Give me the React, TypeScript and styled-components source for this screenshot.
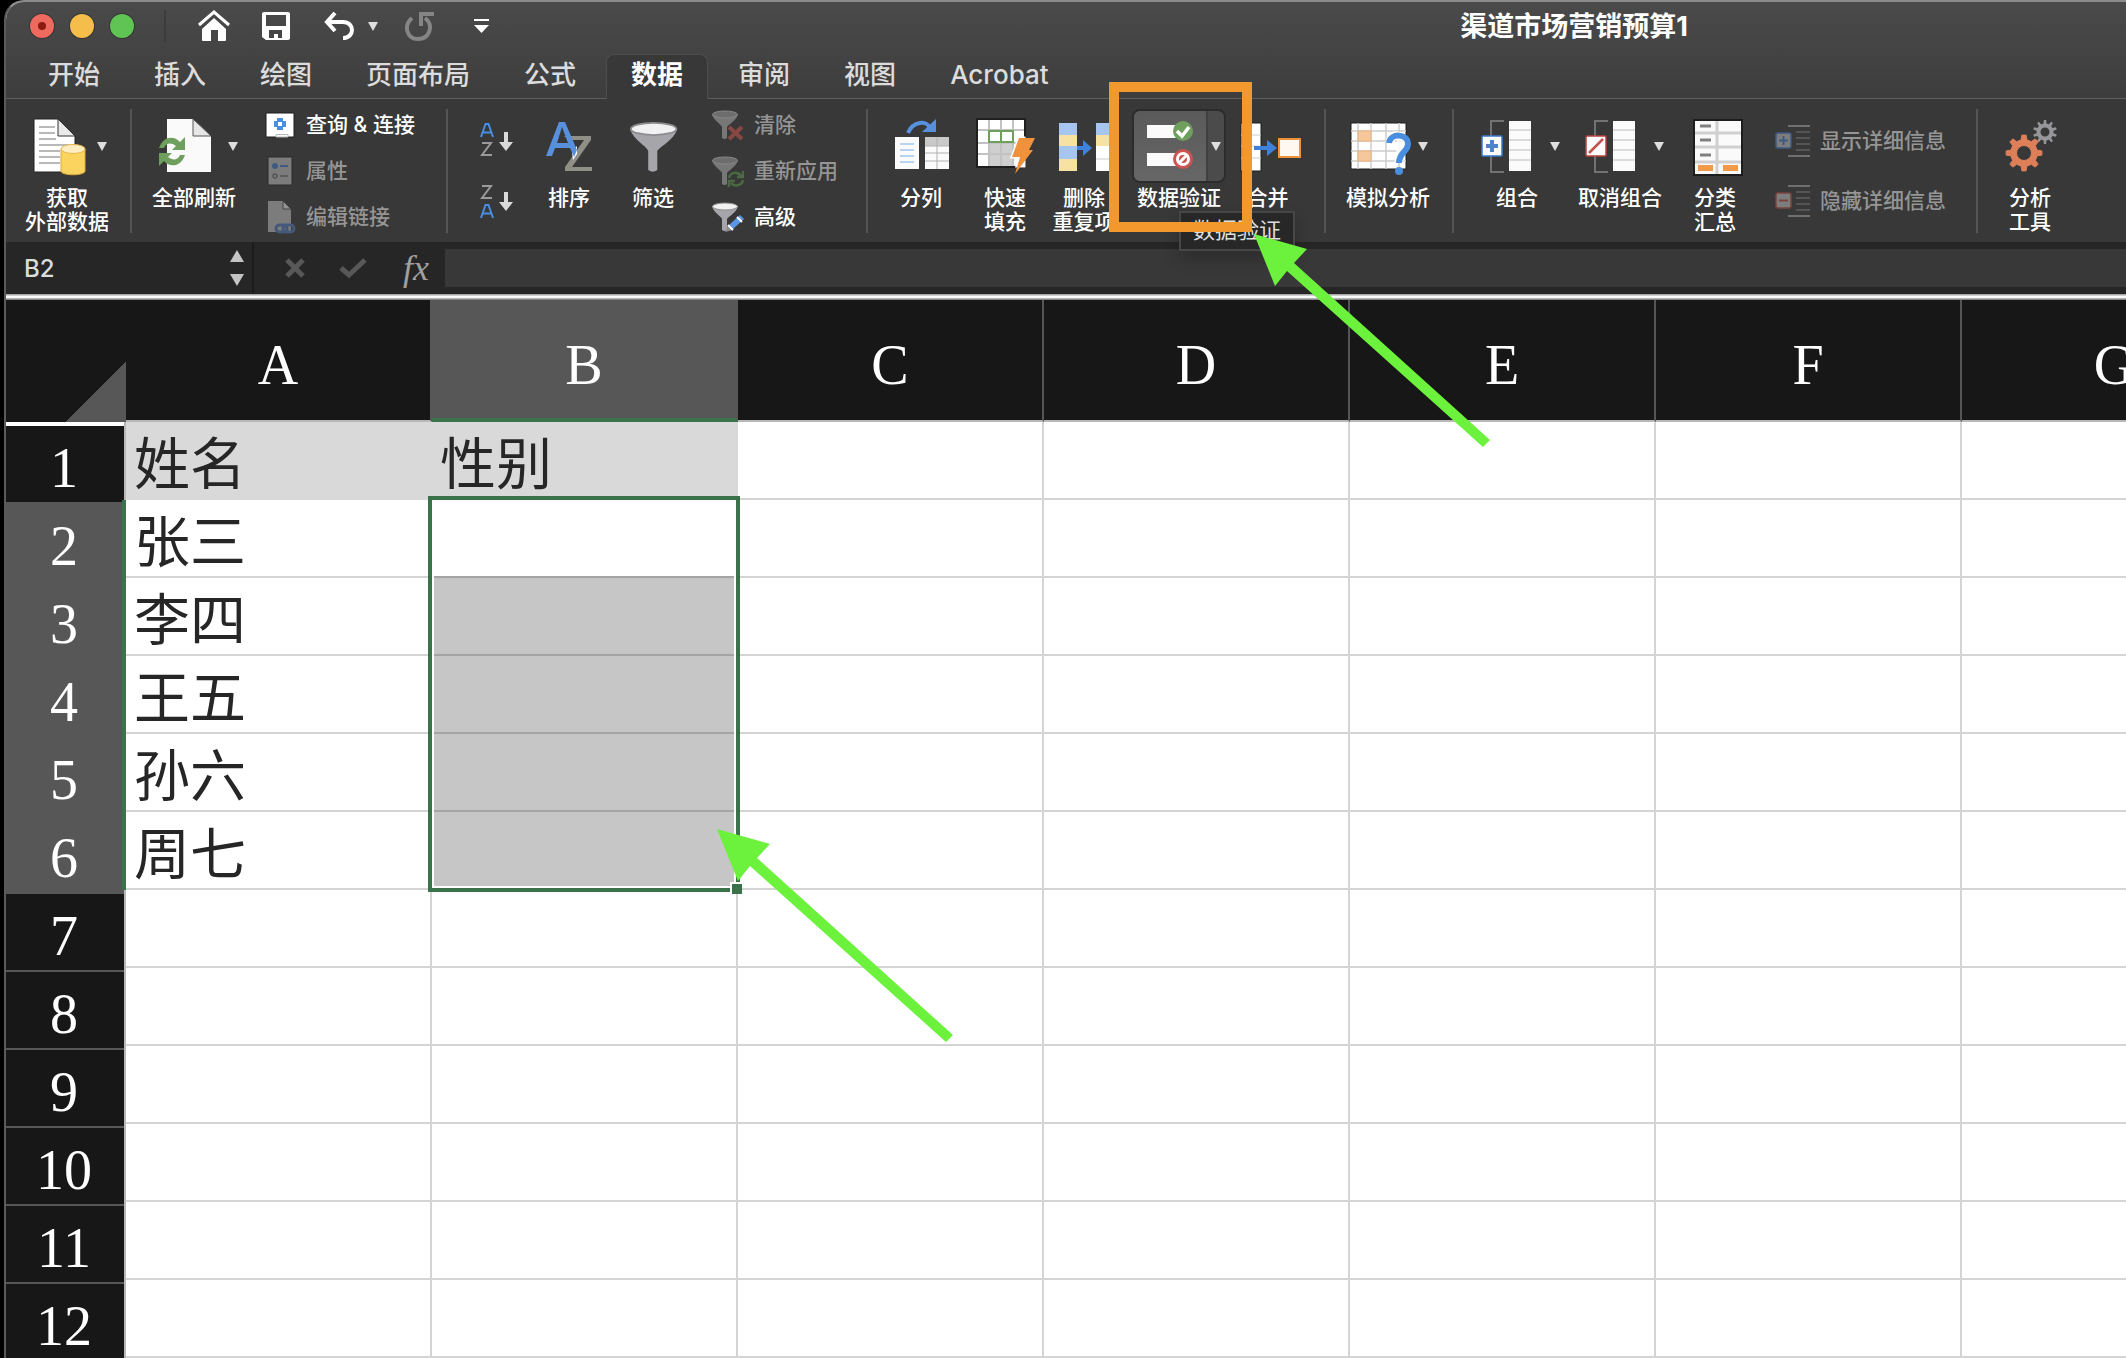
import React from "react";
import styled, { createGlobalStyle, css } from "styled-components";

const UI_FONT = '"Inter", "Noto Sans CJK SC", sans-serif';
const SHEET_FONT = '"Liberation Serif", "Noto Sans CJK SC", serif';

const GREEN = "#3a7349";
const LIME = "#6cf23c";
const HEAD_DARK = "#171717";
const HEAD_PICKED = "#575757";
const HEAD_EDGE = "#b8b8b8";
const GRID_LINE = "#d4d4d4";

const GlobalStyle = createGlobalStyle`
  *, *::before, *::after { box-sizing: border-box; }
  body { margin: 0; background: #000; font-family: ${UI_FONT}; }
  button, input { font: inherit; color: inherit; border: 0; background: none; padding: 0; margin: 0; }
  svg { display: block; flex: none; }
`;

/* ---------- window frame ---------- */

const Page = styled.div`
  position: relative;
  height: 100vh;
  overflow: hidden;
  padding-left: 4px;
`;

const Window = styled.div`
  height: 100%;
  overflow: hidden;
  border-left: 2px solid #5a5a5a;
  border-top: 2px solid #8c8c8c;
  border-top-left-radius: 20px;
  background: #fff;
`;

const Chrome = styled.header`
  background: linear-gradient(#4a4a4a, #3d3d3d);
  border-bottom: 1px solid #5e5e5e;
`;

const TitleBar = styled.div`
  display: flex;
  align-items: center;
  height: 48px;
  padding-left: 24px;
`;

const Lights = styled.div`
  display: flex;
  gap: 16px;
`;

const Light = styled.button<{ $color: string }>`
  display: grid;
  place-items: center;
  width: 24px;
  height: 24px;
  border-radius: 50%;
  background: ${(p) => p.$color};
  box-shadow: 0 0 0 1px rgba(0, 0, 0, 0.25);
`;

const LightDot = styled.span`
  width: 8px;
  height: 8px;
  border-radius: 50%;
  background: #8c1a10;
`;

const TitleSep = styled.span`
  width: 2px;
  height: 32px;
  margin: 0 32px 0 30px;
  background: #3c3c3c;
`;

const QuickTools = styled.div`
  display: flex;
  align-items: center;
`;

const QuickButton = styled.button<{ $gap?: number }>`
  display: grid;
  place-items: center;
  margin-right: ${(p) => p.$gap ?? 0}px;
`;

const Title = styled.h1`
  margin: 0 438px 0 auto;
  padding-top: 2px;
  font-size: 27px;
  line-height: 32px;
  font-weight: 700;
  color: #fff;
`;

const Tabs = styled.nav`
  display: flex;
  gap: 6px;
  padding: 4px 0 0 18px;
`;

const Tab = styled.button<{ $active?: boolean }>`
  height: 45px;
  padding: 0 23px 4px;
  margin-bottom: -1px;
  border: 1px solid transparent;
  border-bottom: 0;
  border-radius: 8px 8px 0 0;
  font-size: 26px;
  line-height: 32px;
  font-weight: 500;
  color: #dcdcdc;
  ${(p) =>
    p.$active &&
    css`
      padding: 0 24px 4px;
      background: #383838;
      border-color: #4e4e4e;
      font-weight: 700;
      color: #fff;
    `}
`;

/* ---------- ribbon ---------- */

const Ribbon = styled.div`
  display: flex;
  height: 143px;
  background: #383838;
  color: #fff;
  font-size: 21px;
  line-height: 24px;
  font-weight: 500;
`;

const Group = styled.section<{ $start?: number; $end?: number }>`
  display: flex;
  align-items: center;
  flex: none;
  padding-left: ${(p) => p.$start ?? 0}px;
  &::after {
    content: "";
    width: 2px;
    height: 124px;
    margin-left: ${(p) => p.$end ?? 2}px;
    background: #555;
  }
  &:last-child::after {
    display: none;
  }
`;

const Big = styled.button<{ $w: number }>`
  flex: none;
  width: ${(p) => p.$w}px;
  height: 129px;
  padding-top: 3px;
  display: flex;
  flex-direction: column;
  align-items: center;
  gap: 3px;
  white-space: pre-line;
`;

const IconRow = styled.span`
  display: flex;
  flex: none;
  align-items: center;
  gap: 6px;
  height: 74px;
`;

const Split = styled.span`
  display: flex;
  flex: none;
  width: 94px;
  height: 74px;
  border: 2px solid #2c2c2c;
  border-radius: 8px;
  background: #4b4b4b;
  overflow: hidden;
`;

const SplitMain = styled.span`
  display: grid;
  place-items: center;
  width: 72px;
  background: linear-gradient(#5a5a5a, #666);
`;

const SplitDrop = styled.span`
  display: grid;
  place-items: center;
  flex: 1;
  border-left: 2px solid #404040;
`;

const List = styled.div<{ $w: number; $start: number }>`
  flex: none;
  width: ${(p) => p.$w}px;
  padding-left: ${(p) => p.$start}px;
  display: flex;
  flex-direction: column;
`;

const ListButton = styled.button<{ $h: number }>`
  display: flex;
  align-items: center;
  gap: 10px;
  height: ${(p) => p.$h}px;
  white-space: nowrap;
  &:disabled {
    color: #959595;
  }
`;

/* ---------- formula bar ---------- */

const FormulaBar = styled.div`
  display: flex;
  align-items: center;
  height: 52px;
  background: #262626;
  color: #dcdcdc;
  font-size: 24px;
  font-weight: 500;
`;

const NameBox = styled.div`
  display: flex;
  align-items: center;
  width: 248px;
  height: 52px;
  padding: 0 8px 0 18px;
  border-right: 2px solid #1c1c1c;
`;

const NameInput = styled.input`
  flex: 1;
  min-width: 0;
  outline: 0;
`;

const Stepper = styled.div`
  display: flex;
  flex-direction: column;
  gap: 12px;
`;

const FormulaTools = styled.div`
  display: flex;
  align-items: center;
  gap: 34px;
  padding: 0 14px 0 31px;
`;

const FormulaInput = styled.input`
  flex: 1;
  height: 38px;
  padding: 0 10px;
  background: #383838;
  outline: 0;
`;

const Rail = styled.div`
  height: 6px;
  background: linear-gradient(#a8a6a8 0 1px, #cfcdcf 1px 2px, #fafafa 2px 4px, #b4b2b4 4px 5px, #8a898a 5px);
`;

/* ---------- sheet ---------- */

const Sheet = styled.table`
  table-layout: fixed;
  width: 2262px;
  border-collapse: separate;
  border-spacing: 0;
  font-family: ${SHEET_FONT};
  font-size: 56px;
  line-height: 60px;
  color: #262626;
`;

const HeadCol = styled.col`
  width: 120px;
`;

const DataCol = styled.col`
  width: 306px;
`;

const Corner = styled.td`
  height: 122px;
  padding: 0;
  background: linear-gradient(to bottom right, ${HEAD_DARK} 50%, ${HEAD_PICKED} 50%) right bottom / 60px 60px no-repeat
    ${HEAD_DARK};
`;

const ColumnHead = styled.th<{ $picked: boolean; $beforePicked: boolean }>`
  height: 122px;
  padding: ${(p) => (p.$picked ? 12 : 10)}px 0 0;
  font-weight: 400;
  color: #fff;
  background: ${(p) => (p.$picked ? HEAD_PICKED : HEAD_DARK)};
  border-right: 2px solid ${(p) => (p.$picked || p.$beforePicked ? HEAD_PICKED : "#555")};
  border-bottom: ${(p) => (p.$picked ? `4px solid ${GREEN}` : `2px solid ${HEAD_EDGE}`)};
`;

const RowHead = styled.th<{ $picked: boolean; $lead: string }>`
  height: 78px;
  padding: 14px ${(p) => (p.$picked ? 0 : 2)}px 0 0;
  font-weight: 400;
  color: #fff;
  border-right: ${(p) => (p.$picked ? `4px solid ${GREEN}` : `2px solid ${HEAD_EDGE}`)};
  background: ${(p) => `linear-gradient(${p.$lead}, ${p.$picked ? HEAD_PICKED : HEAD_DARK} 4px)`};
`;

const Cell = styled.td<{ $filled?: boolean }>`
  position: relative;
  height: 78px;
  padding: 10px 8px 0;
  white-space: nowrap;
  background: ${(p) => (p.$filled ? "#d9d9d9" : "#fff")};
  border-right: 2px solid ${(p) => (p.$filled ? "#d9d9d9" : GRID_LINE)};
  border-bottom: 2px solid ${(p) => (p.$filled ? "#d9d9d9" : GRID_LINE)};
`;

/* Frame round B2:B6, anchored in the active cell. */
const Selection = styled.div`
  position: absolute;
  z-index: 1;
  left: -4px;
  top: -4px;
  width: 312px;
  height: 396px;
  border: 4px solid ${GREEN};
  box-shadow: inset 0 0 0 2px #fff;
`;

const Shade = styled.div`
  position: absolute;
  inset: 76px 2px 2px;
  background: rgba(0, 0, 0, 0.225);
`;

const FillHandle = styled.div`
  position: absolute;
  right: -6px;
  bottom: -6px;
  width: 12px;
  height: 12px;
  background: ${GREEN};
  border: solid #fff;
  border-width: 2px 0 0 2px;
`;

/* ---------- things drawn over the window ---------- */

const Tooltip = styled.div`
  position: absolute;
  left: 1179px;
  top: 211px;
  padding: 4px 12px 6px;
  border: 2px solid #474747;
  background: #272727;
  color: #dedede;
  font-size: 22px;
  line-height: 26px;
  box-shadow: 0 8px 16px rgba(0, 0, 0, 0.2);
`;

const Highlight = styled.div`
  position: absolute;
  z-index: 2;
  left: 1109px;
  top: 82px;
  width: 143px;
  height: 150px;
  border: 10px solid #f2982c;
  pointer-events: none;
`;

const Arrow = styled.svg<{ $x: number; $y: number }>`
  position: absolute;
  z-index: 2;
  left: ${(p) => p.$x}px;
  top: ${(p) => p.$y}px;
  pointer-events: none;
`;

const PointerArrow = ({ x, y }: { x: number; y: number }) => (
  <Arrow $x={x} $y={y} width="240" height="216" fill={LIME} aria-hidden="true">
    <path d="M0 0 53 15 40 29 236 206 229 213 33 37 21 52Z" />
  </Arrow>
);

/* ---------- icons ---------- */

const Caret = ({ color = "#dedede" }: { color?: string }) => (
  <svg width="10" height="9" fill={color} aria-hidden="true">
    <path d="M0 0H10L5 9Z" />
  </svg>
);

const Triangle = ({ up }: { up?: boolean }) => (
  <svg width="14" height="12" fill="#c4c4c4" aria-hidden="true">
    <path d={up ? "M0 12H14L7 0Z" : "M0 0H14L7 12Z"} />
  </svg>
);

const HomeIcon = () => (
  <svg width="32" height="32" fill="#fff">
    <path d="M1 15 16 2 31 15" fill="none" stroke="#fff" strokeWidth="3" />
    <path d="M4 19 16 8 28 19V30Q28 31 27 31H20V20H13V31H5Q4 31 4 30Z" />
  </svg>
);

const SaveIcon = () => (
  <svg width="28" height="28">
    <path fill="#fff" fillRule="evenodd" d="M2 0H26Q28 0 28 2V26Q28 28 26 28H4L0 25V2Q0 0 2 0ZM4 3V14H24V3ZM7 18V26H12V22H16V26H20V18Z" />
  </svg>
);

const UndoIcon = () => (
  <svg width="30" height="28" fill="none" stroke="#fff" strokeWidth="4">
    <path d="M11 1 3 10 11 19M3 10H19C25 10 28 14 28 18S25 26 19 26" />
  </svg>
);

const RedoIcon = () => (
  <svg width="30" height="32" fill="none" stroke="#858585" strokeWidth="4">
    <path d="M8 8C-1 16 3 29 14 29C26 29 30 15 21 8M17 16V4H30" />
  </svg>
);

const CustomizeIcon = () => (
  <svg width="15" height="15" fill="#fff">
    <path d="M0 0H15V2H0ZM0 6H15L7.5 14Z" />
  </svg>
);

const ImportIcon = () => (
  <svg width="63" height="60">
    <path d="M6 3H30L47 20V56H6Z" fill="#fff" stroke="#222" />
    <path d="M11 11H27M11 17H27M11 23H28M11 29H42M11 35H32M11 41H32M11 47H32" stroke="#b9b9b9" strokeWidth="2" />
    <path d="M30 3 47 20H30Z" fill="#e9e9e9" stroke="#333" />
    <path d="M33 33V55C33 60 57 60 57 55V33Z" fill="#fbd35f" stroke="#d9a93c" />
    <ellipse cx="45" cy="33" rx="12" ry="4.5" fill="#fdedc0" stroke="#e6b84a" />
  </svg>
);

const RefreshIcon = () => (
  <svg width="72" height="60">
    <path d="M17 3H43L61 20V56H17Z" fill="#fafafa" />
    <path d="M43 3 61 20H43Z" fill="#e6e6e6" stroke="#555" />
    <g fill="#6f9f5c">
      <path d="M9 32C13 20 24 19 30 26L35 21V34H22L26 30C21 26 16 27 14 32Z" />
      <path d="M35 39C31 51 20 52 14 45L9 50V37H22L18 41C23 45 28 44 30 39Z" />
    </g>
  </svg>
);

const QueryIcon = () => (
  <svg width="32" height="32">
    <path d="M2 4H30V28H12V28H2Z" fill="#fff" stroke="#1d1d1d" />
    <path d="M12 25.5H24V28H12Z" fill="#fff" stroke="#bbb" />
    <path d="M13 9H19V12H22V18H19V21H13V18H10V12H13Z" fill="#4a8ee0" />
    <rect x="14" y="13" width="4" height="4" fill="#fff" />
  </svg>
);

const PropertiesIcon = () => (
  <svg width="32" height="32">
    <rect x="4" y="2" width="24" height="28" fill="#7c7c7c" stroke="#2a2a2a" />
    <circle cx="11" cy="11" r="3" fill="#3f5b82" />
    <path d="M16 11H24" stroke="#3f5b82" strokeWidth="2" />
    <circle cx="11" cy="21" r="2" fill="none" stroke="#555" strokeWidth="1.5" />
    <path d="M16 21H24" stroke="#5c5c5c" strokeWidth="2" />
  </svg>
);

const EditLinkIcon = () => (
  <svg width="32" height="34">
    <path d="M4 1H19L27 9V32H4Z" fill="#7c7c7c" />
    <path d="M19 1 27 9H19Z" fill="#929292" stroke="#444" />
    <g fill="none" stroke="#44597a" strokeWidth="3">
      <rect x="12" y="25" width="11" height="7" rx="3.5" />
      <rect x="19" y="25" width="11" height="7" rx="3.5" />
    </g>
  </svg>
);

const SmallSortIcon = ({ down }: { down?: boolean }) => (
  <svg width="40" height="36" fill="none" strokeWidth="2">
    <path
      d="M0 13 4.5 0H7.5L12 13M2 8.5H10"
      transform={down ? "translate(3 22)" : "translate(3 1)"}
      stroke="#4a8ee0"
    />
    <path d="M0 0H9L0 12H10" transform={down ? "translate(4 3)" : "translate(4 20)"} stroke="#9a9a9a" />
    <path d="M26 9H30V19H35L28 28 21 19H26Z" fill="#dadada" />
  </svg>
);

const SortIcon = () => (
  <svg width="50" height="60" fill="none">
    <path d="M20 20H47V24L28 51H48V55H21V51L40 24H26" fill="#8f8f88" />
    <path d="M28 36 33 30V38L29 44Z" fill="#fff" />
    <path fillRule="evenodd" d="M2 40 15 6H21L33 34 30 41 26 32H11L8 40ZM13 27H24L18 11Z" fill="#5790dc" />
  </svg>
);

const Funnel = ({ muted }: { muted?: boolean }) => (
  <g>
    <path d="M0 4.5C2 11 9 14 10 17V28Q12.5 30 15 28V17C17 14 24 11 26 4.5Z" fill={muted ? "#777" : "#a5a5aa"} />
    <ellipse cx="13" cy="4.5" rx="12.5" ry="3.5" fill={muted ? "#6d6d6d" : "#f1f1f1"} stroke={muted ? "#888" : "#8c8c90"} />
  </g>
);

const FilterIcon = () => (
  <svg width="50" height="60">
    <g transform="translate(2 5) scale(1.82 1.75)">
      <Funnel />
    </g>
  </svg>
);

const ClearFilterIcon = () => (
  <svg width="32" height="32">
    <g transform="translate(0 1)">
      <Funnel muted />
    </g>
    <path d="M17 18 30 30M30 18 17 30" stroke="#874843" strokeWidth="4" />
  </svg>
);

const ReapplyIcon = () => (
  <svg width="32" height="32">
    <g transform="translate(0 1)">
      <Funnel muted />
    </g>
    <circle cx="24" cy="24" r="9" fill="#383838" />
    <g fill="none" stroke="#4b6a42" strokeWidth="2.5">
      <path d="M17 23C18 17 26 16 29 21M31 16V22H25" />
      <path d="M31 25C30 31 22 32 19 28M17 32V26H23" />
    </g>
  </svg>
);

const AdvancedIcon = () => (
  <svg width="32" height="32">
    <g transform="translate(0 1)">
      <Funnel />
    </g>
    <path d="M13 31 16 24 21 29Z" fill="#8d8d8d" />
    <path d="M17 24 28 14 32 18 21 28Z" fill="#5b97e4" />
    <path d="M16 24 21 29M25 16 30 21" stroke="#fff" strokeWidth="2" />
  </svg>
);

const ColumnsIcon = () => (
  <svg width="56" height="60">
    <path d="M15 17C20 5 34 4 37 12" fill="none" stroke="#5790dc" strokeWidth="4" />
    <path d="M43 3V16H29Z" fill="#5790dc" />
    <rect x="2" y="21" width="24" height="32" fill="#fbfbfb" />
    <path d="M7 28H21M7 34H21M7 40H21M7 46H21" stroke="#b7d4f5" strokeWidth="2" />
    <rect x="32" y="21" width="24" height="32" fill="#fbfbfb" />
    <rect x="32" y="21" width="24" height="9" fill="#c9c9c9" />
    <path d="M32 30H56M32 37H56M32 45H56M44 21V53" stroke="#b0b0b0" />
  </svg>
);

const FlashFillIcon = () => (
  <svg width="62" height="60">
    <rect x="3" y="3" width="48" height="48" fill="#fff" stroke="#1f1f1f" strokeWidth="2" />
    <rect x="15" y="27" width="24" height="23" fill="#cfcfcf" />
    <path d="M15 4V50M27 4V50M39 4V50M4 14H50M4 27H50M4 38H50" stroke="#c2c2c2" strokeWidth="2" />
    <path d="M15 15H39V26H15ZM27 15V26" fill="#fff" stroke="#6f9f5c" strokeWidth="2" />
    <path d="M45 22H50V50H43L46 41H38Z" fill="#fff" stroke="#fff" strokeWidth="3" />
    <path d="M45 22H61L55 34H59L41 58 46 41H38Z" fill="#f0913c" />
  </svg>
);

const DedupeIcon = () => (
  <svg width="60" height="60">
    <path d="M5 7H23V19H5ZM5 30H23V43H5Z" fill="#a6c6f0" />
    <path d="M5 19H23V30H5ZM5 43H23V55H5Z" fill="#f8e2a1" />
    <path d="M23 30H29V24L38 32 29 40V34H23Z" fill="#3f82dc" />
    <path d="M42 7H60V19H42Z" fill="#a6c6f0" />
    <path d="M42 19H60V30H42Z" fill="#f8e2a1" />
    <path d="M42 30H60V55H42Z" fill="#fff" />
    <path d="M42 43H60" stroke="#ccc" />
  </svg>
);

const ValidationIcon = () => (
  <svg width="48" height="50">
    <rect x="1" y="4" width="32" height="13" fill="#fbfbfb" />
    <rect x="1" y="32" width="32" height="13" fill="#fbfbfb" />
    <circle cx="37" cy="10" r="10" fill="#6f9f5c" />
    <path d="M31 10 36 15 43 6" fill="none" stroke="#fff" strokeWidth="3.5" />
    <circle cx="37" cy="38" r="10" fill="#cb5350" />
    <circle cx="37" cy="38" r="5.5" fill="none" stroke="#fff" strokeWidth="3" />
    <path d="M33 42 41 34" stroke="#fff" strokeWidth="3" />
  </svg>
);

const MergeIcon = () => (
  <svg width="66" height="60">
    <rect x="6" y="7" width="20" height="48" fill="#fff" stroke="#1d1d1d" />
    <path d="M6 19H26M6 30H26M6 42H26" stroke="#ccc" />
    <path d="M19 30H32V24L42 32 32 40V34H19Z" fill="#3f82dc" />
    <rect x="44" y="23" width="21" height="18" fill="#fff8f1" stroke="#f0913c" strokeWidth="2" />
  </svg>
);

const WhatIfIcon = () => (
  <svg width="64" height="60">
    <rect x="3" y="7" width="55" height="46" fill="#fff" stroke="#1d1d1d" />
    <path d="M3 15H58M3 25H58M3 35H58M3 45H58M10 7V53M23 7V53M38 7V53M51 7V53" stroke="#cdcdcd" strokeWidth="1.5" />
    <path d="M10 15H23V25H10ZM10 35H23V45H10Z" fill="#f6c79a" stroke="#eab27c" />
    <path d="M42 27C42 17 54 17 54 28C54 36 51 37 51 47" fill="none" stroke="#fff" strokeWidth="9" opacity=".8" />
    <path d="M41 27C42 17 60 17 60 28C60 36 51 36 51 47" fill="none" stroke="#4a8ee0" strokeWidth="6" />
    <circle cx="51" cy="55" r="4" fill="#4a8ee0" />
  </svg>
);

const GroupIcon = ({ undo }: { undo?: boolean }) => (
  <svg width={undo ? 72 : 70} height="60">
    <g transform={undo ? "translate(2 0)" : undefined}>
      <path d="M30 5H17V56H30" fill="none" stroke="#727272" strokeWidth="2" />
      <rect x="35" y="5" width="22" height="50" fill="#fbfbfb" />
      <path d="M35 14H57M35 24H57M35 34H57M35 44H57" stroke="#bdbdbd" />
      <rect x="8" y="20" width="20" height="20" rx="1" fill="#fbfbfb" stroke={undo ? "#b5413c" : "#3a78cc"} strokeWidth="1.5" />
      {undo ? (
        <path d="M11 37 25 23" stroke="#c25450" strokeWidth="2.5" />
      ) : (
        <path d="M18 24V36M12 30H24" stroke="#4d83cd" strokeWidth="4" />
      )}
    </g>
  </svg>
);

const SubtotalIcon = () => (
  <svg width="56" height="60">
    <rect x="7" y="4" width="48" height="55" fill="#fafafa" stroke="#1d1d1d" strokeWidth="2" />
    <path d="M8 17H54M8 31H54M8 46H54M30 5V58" stroke="#d0d0d0" strokeWidth="3" />
    <path d="M13 10H24M13 24H24M13 39H24" stroke="#808080" strokeWidth="3" />
    <path d="M11 49H26V55H11ZM36 49H51V55H36Z" fill="#f2994a" />
  </svg>
);

const DetailIcon = ({ minus }: { minus?: boolean }) => (
  <svg width="36" height="34">
    <path d="M14 2H36M14 32H36" stroke="#707070" strokeWidth="2" />
    <path d="M22 8H36M22 14H36M22 20H36M22 26H36" stroke="#555" strokeWidth="2" />
    <rect x="2" y="9" width="15" height="15" rx="2" fill="#7d7d7d" stroke={minus ? "#7b423e" : "#3d5a85"} strokeWidth="1.5" />
    <path d={minus ? "M5 16.5H14" : "M5 16.5H14M9.5 12V21"} stroke={minus ? "#7b423e" : "#3d5a85"} strokeWidth="2" />
  </svg>
);

const gearPath = (cx: number, cy: number, outer: number, inner: number, hole: number, teeth: number) => {
  const step = (Math.PI * 2) / teeth;
  const at = (r: number, a: number) => `${(cx + r * Math.sin(a)).toFixed(2)} ${(cy - r * Math.cos(a)).toFixed(2)}`;
  let d = "";
  for (let i = 0; i < teeth; i++) {
    const a = i * step;
    d += `${i ? "L" : "M"}${at(inner, a - step * 0.27)}L${at(outer, a - step * 0.15)}L${at(outer, a + step * 0.15)}L${at(inner, a + step * 0.27)}`;
  }
  return `${d}ZM${cx - hole} ${cy}a${hole} ${hole} 0 1 0 ${hole * 2} 0a${hole} ${hole} 0 1 0 ${-hole * 2} 0Z`;
};

const GearsIcon = () => (
  <svg width="54" height="60" fillRule="evenodd">
    <path d={gearPath(42, 16, 12, 8.5, 4.5, 10)} fill="#97979b" />
    <path d={gearPath(21, 37, 18, 13.5, 7.5, 8)} fill="#dd7f59" strokeLinejoin="round" stroke="#dd7f59" />
  </svg>
);

const CancelIcon = () => (
  <svg width="20" height="20" stroke="#585858" strokeWidth="5">
    <path d="M2 2 18 18M18 2 2 18" />
  </svg>
);

const ConfirmIcon = () => (
  <svg width="28" height="22" fill="none" stroke="#585858" strokeWidth="5">
    <path d="M2 11 10 18 26 3" />
  </svg>
);

const FxButton = styled.button`
  width: 30px;
  font-family: "Liberation Serif", serif;
  font-style: italic;
  font-size: 36px;
  line-height: 38px;
  color: #a0a0a0;
`;

/* ---------- data ---------- */

const TABS = ["开始", "插入", "绘图", "页面布局", "公式", "数据", "审阅", "视图", "Acrobat"];
const ACTIVE_TAB = "数据";

const COLUMNS = ["A", "B", "C", "D", "E", "F", "G"];
const ROWS: string[][] = [
  ["姓名", "性别"],
  ["张三"],
  ["李四"],
  ["王五"],
  ["孙六"],
  ["周七"],
  [],
  [],
  [],
  [],
  [],
  [],
];

const isPickedRow = (row: number) => row >= 2 && row <= 6;

const leadBand = (row: number) => {
  if (row === 1) return "#fff 0 4px";
  if (row === 2) return `${HEAD_DARK} 0 2px, ${HEAD_PICKED} 2px 4px`;
  if (row <= 7) return `${HEAD_PICKED} 0 4px`;
  return `${HEAD_DARK} 0 2px, ${HEAD_PICKED} 2px 4px`;
};

type BigProps = { w: number; label: string; icon: React.ReactNode; drop?: boolean };

const BigButton = ({ w, label, icon, drop }: BigProps) => (
  <Big $w={w}>
    <IconRow>
      {icon}
      {drop && <Caret />}
    </IconRow>
    {label}
  </Big>
);

type ListItemProps = { label: string; icon: React.ReactNode; h?: number; disabled?: boolean };

const ListItem = ({ label, icon, h = 46, disabled }: ListItemProps) => (
  <ListButton $h={h} disabled={disabled}>
    {icon}
    {label}
  </ListButton>
);

export default function App() {
  return (
    <Page>
      <GlobalStyle />
      <Window>
        <Chrome>
          <TitleBar>
            <Lights>
              <Light $color="#ee6a5f" aria-label="关闭">
                <LightDot />
              </Light>
              <Light $color="#f5bd4a" aria-label="最小化" />
              <Light $color="#5fc454" aria-label="缩放" />
            </Lights>
            <TitleSep />
            <QuickTools>
              <QuickButton $gap={32} aria-label="主页"><HomeIcon /></QuickButton>
              <QuickButton $gap={34} aria-label="保存"><SaveIcon /></QuickButton>
              <QuickButton $gap={14} aria-label="撤消"><UndoIcon /></QuickButton>
              <QuickButton $gap={26} aria-label="撤消选项"><Caret /></QuickButton>
              <QuickButton $gap={40} aria-label="重做"><RedoIcon /></QuickButton>
              <QuickButton aria-label="自定义"><CustomizeIcon /></QuickButton>
            </QuickTools>
            <Title>渠道市场营销预算1</Title>
          </TitleBar>
          <Tabs>
            {TABS.map((t) => (
              <Tab key={t} $active={t === ACTIVE_TAB}>{t}</Tab>
            ))}
          </Tabs>
        </Chrome>

        <Ribbon>
          <Group>
            <BigButton w={122} label={"获取\n外部数据"} icon={<ImportIcon />} drop />
          </Group>
          <Group>
            <BigButton w={124} label="全部刷新" icon={<RefreshIcon />} drop />
            <List $w={188} $start={8}>
              <ListItem label="查询 & 连接" icon={<QueryIcon />} />
              <ListItem label="属性" icon={<PropertiesIcon />} disabled />
              <ListItem label="编辑链接" icon={<EditLinkIcon />} disabled />
            </List>
          </Group>
          <Group>
            <List $w={79} $start={30}>
              <ListButton $h={60} aria-label="升序"><SmallSortIcon /></ListButton>
              <ListButton $h={60} aria-label="降序"><SmallSortIcon down /></ListButton>
            </List>
            <BigButton w={84} label="排序" icon={<SortIcon />} />
            <BigButton w={84} label="筛选" icon={<FilterIcon />} />
            <List $w={169} $start={17}>
              <ListItem label="清除" icon={<ClearFilterIcon />} disabled />
              <ListItem label="重新应用" icon={<ReapplyIcon />} disabled />
              <ListItem label="高级" icon={<AdvancedIcon />} />
            </List>
          </Group>
          <Group $start={11} $end={26}>
            <BigButton w={84} label="分列" icon={<ColumnsIcon />} />
            <BigButton w={84} label={"快速\n填充"} icon={<FlashFillIcon />} />
            <BigButton w={74} label={"删除\n重复项"} icon={<DedupeIcon />} />
            <Big $w={116}>
              <Split>
                <SplitMain><ValidationIcon /></SplitMain>
                <SplitDrop><Caret /></SplitDrop>
              </Split>
              数据验证
            </Big>
            <BigButton w={61} label="合并" icon={<MergeIcon />} />
          </Group>
          <Group>
            <BigButton w={124} label="模拟分析" icon={<WhatIfIcon />} drop />
          </Group>
          <Group $start={6}>
            <BigButton w={114} label="组合" icon={<GroupIcon />} drop />
            <BigButton w={92} label="取消组合" icon={<GroupIcon undo />} drop />
            <BigButton w={98} label={"分类\n汇总"} icon={<SubtotalIcon />} />
            <List $w={210} $start={10}>
              <ListItem h={60} label="显示详细信息" icon={<DetailIcon />} disabled />
              <ListItem h={60} label="隐藏详细信息" icon={<DetailIcon minus />} disabled />
            </List>
          </Group>
          <Group>
            <BigButton w={104} label={"分析\n工具"} icon={<GearsIcon />} />
          </Group>
        </Ribbon>

        <FormulaBar>
          <NameBox>
            <NameInput aria-label="名称框" defaultValue="B2" />
            <Stepper>
              <QuickButton aria-label="上一个"><Triangle up /></QuickButton>
              <QuickButton aria-label="下一个"><Triangle /></QuickButton>
            </Stepper>
          </NameBox>
          <FormulaTools>
            <QuickButton aria-label="取消"><CancelIcon /></QuickButton>
            <QuickButton aria-label="输入"><ConfirmIcon /></QuickButton>
            <FxButton>fx</FxButton>
          </FormulaTools>
          <FormulaInput aria-label="编辑栏" />
        </FormulaBar>
        <Rail />

        <Sheet>
          <colgroup>
            <HeadCol />
            {COLUMNS.map((c) => (
              <DataCol key={c} />
            ))}
          </colgroup>
          <thead>
            <tr>
              <Corner />
              {COLUMNS.map((c) => (
                <ColumnHead key={c} scope="col" $picked={c === "B"} $beforePicked={c === "A"}>{c}</ColumnHead>
              ))}
            </tr>
          </thead>
          <tbody>
            {ROWS.map((cells, r) => (
              <tr key={r}>
                <RowHead scope="row" $picked={isPickedRow(r + 1)} $lead={leadBand(r + 1)}>{r + 1}</RowHead>
                {COLUMNS.map((c, i) => (
                  <Cell key={c} $filled={r === 0 && i < 2}>
                    {cells[i]}
                    {r === 1 && c === "B" && (
                      <Selection>
                        <Shade />
                        <FillHandle />
                      </Selection>
                    )}
                  </Cell>
                ))}
              </tr>
            ))}
          </tbody>
        </Sheet>
      </Window>

      <Tooltip role="tooltip">数据验证</Tooltip>
      <Highlight />
      <PointerArrow x={1254} y={234} />
      <PointerArrow x={717} y={829} />
    </Page>
  );
}
